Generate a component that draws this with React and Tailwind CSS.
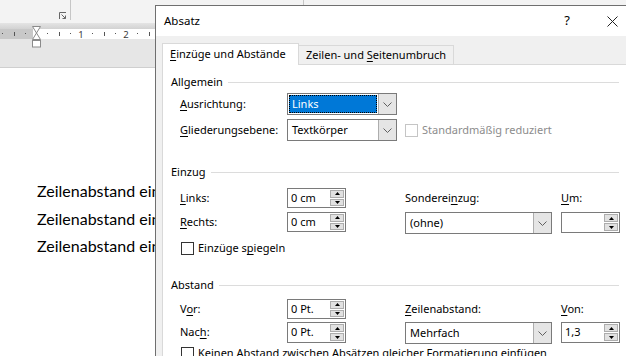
import React from 'react';

const U = ({ children }) => (
  <span className="underline decoration-[1px] underline-offset-[2px]">{children}</span>
);

function Chevron() {
  return (
    <svg width="9" height="5" viewBox="0 0 9 5">
      <path d="M0.5 0.5L4.5 4.5L8.5 0.5" fill="none" stroke="#606060" strokeWidth="1" />
    </svg>
  );
}

function Combo({ value, width, selected }) {
  return (
    <div className={`flex h-[22px] border border-[#7a7a7a] bg-white ${width}`}>
      <div className="flex flex-1 items-center p-px">
        {selected ? (
          <div className="flex h-full w-full items-center border border-dotted border-black bg-[#0078d7] pl-[2px] text-white">
            {value}
          </div>
        ) : (
          <span className="pl-[3px]">{value}</span>
        )}
      </div>
      <div className="flex w-[18px] items-center justify-center border-l border-[#adadad] bg-[#e5e5e5]">
        <Chevron />
      </div>
    </div>
  );
}

function Spin({ value, height = 'h-[20px]' }) {
  return (
    <div className={`flex w-[59px] border border-[#7a7a7a] bg-white ${height}`}>
      <div className="flex flex-1 items-center pl-[3px]">{value}</div>
      <div className="flex w-[16px] flex-col gap-px p-px">
        <div className="flex flex-1 items-center justify-center border border-[#adadad] bg-[#e1e1e1]">
          <svg width="5" height="3" viewBox="0 0 5 3">
            <path d="M2.5 0L5 3H0Z" fill="#000" />
          </svg>
        </div>
        <div className="flex flex-1 items-center justify-center border border-[#adadad] bg-[#e1e1e1]">
          <svg width="5" height="3" viewBox="0 0 5 3">
            <path d="M0 0H5L2.5 3Z" fill="#000" />
          </svg>
        </div>
      </div>
    </div>
  );
}

function Check({ disabled }) {
  return (
    <div
      className={`h-[13px] w-[13px] shrink-0 border bg-white ${
        disabled ? 'border-[#c5c5c5]' : 'border-[#333333]'
      }`}
    />
  );
}

function Group({ title }) {
  return (
    <div className="flex h-[16px] items-center pl-[8px] pr-[9px]">
      <span>{title}</span>
      <div className="ml-[5px] h-px flex-1 bg-[#dcdcdc]" />
    </div>
  );
}

function Label({ children, width = 'w-[107px]', h = 'h-[20px]' }) {
  return <div className={`flex shrink-0 items-center whitespace-nowrap ${width} ${h}`}>{children}</div>;
}

function Ruler() {
  const ticks = [];
  for (let k = -3; k <= 52; k++) {
    if (k === 0) continue;
    const x = 36 + 11.25 * k;
    const m = ((k % 4) + 4) % 4;
    if (m === 0) {
      ticks.push(
        <text key={k} x={x} y={8.5} fontSize="9.5" textAnchor="middle" fill="#3c3c3c" fontFamily="Noto Sans, sans-serif">
          {k / 4}
        </text>
      );
    } else if (m === 2) {
      ticks.push(<rect key={k} x={Math.round(x)} y={3} width={1} height={4} fill="#555" />);
    } else {
      ticks.push(<rect key={k} x={Math.round(x)} y={4} width={1} height={1} fill="#555" />);
    }
  }
  return (
    <svg width="626" height="10" viewBox="0 0 626 10" className="block">
      <rect x="0" y="0" width="626" height="10" fill="#ffffff" />
      <rect x="0" y="0" width="33" height="10" fill="#c8c8c8" />
      {ticks}
    </svg>
  );
}

export default function App() {
  const lines = ['Zeilenabstand ein', 'Zeilenabstand ein', 'Zeilenabstand ein'];
  return (
    <div className="relative h-[356px] w-[626px] overflow-hidden bg-white font-['Noto_Sans',sans-serif] text-[11px] text-black">
      {/* Word-Hintergrund */}
      <div className="flex h-[23px] bg-[#f3f3f3]">
        <div className="w-[70px] pl-[59px] pt-[12px]">
          <svg width="8" height="8" viewBox="0 0 8 8">
            <path d="M0.5 7V0.5H7" fill="none" stroke="#666" strokeWidth="1" />
            <path d="M2.5 2.5L6.5 6.5M6.5 3.5V6.5H3.5" fill="none" stroke="#666" strokeWidth="1" />
          </svg>
        </div>
        <div className="h-[20px] w-px bg-[#c6c6c6]" />
        <div className="w-[232px]" />
        <div className="h-[20px] w-px bg-[#c6c6c6]" />
      </div>
      <div className="h-[6px] bg-gradient-to-b from-[#e4e4e4] to-[#d2d2d2]" />
      <Ruler />
      <div className="h-[29px] border-b border-[#cfcfcf] bg-[#e6e6e6]" />
      <div className="pl-[37px] pt-[109px] font-['Lato',sans-serif] text-[16px] leading-[27.5px]">
        {lines.map((l, i) => (
          <div key={i} className="whitespace-nowrap">
            {l}
          </div>
        ))}
      </div>

      {/* Einzugsmarke */}
      <svg className="absolute left-[32px] top-[26px]" width="9" height="22" viewBox="0 0 9 22">
        <path d="M0.5 0.5H8.5L4.5 7L8.5 13.5H0.5L4.5 7Z" fill="#fff" stroke="#8a8a8a" />
        <rect x="0.5" y="14.5" width="8" height="6.5" fill="#fff" stroke="#8a8a8a" />
      </svg>

      {/* Dialog Absatz */}
      <div className="absolute left-[155px] top-[5px] flex h-[360px] w-[480px] flex-col border-l border-t border-[#6f6f6f] bg-[#f0f0f0]">
        <div className="flex h-[30px] shrink-0 items-center bg-white pl-[8px]">
          <span className="text-[11.5px]">Absatz</span>
          <div className="flex-1" />
          <span className="w-[20px] text-center text-[13px]">?</span>
          <div className="ml-[25px] mr-[13px] flex w-[20px] justify-center">
            <svg width="11" height="11" viewBox="0 0 11 11">
              <path d="M0.5 0.5L10.5 10.5M10.5 0.5L0.5 10.5" stroke="#222" strokeWidth="1" />
            </svg>
          </div>
        </div>

        <div className="flex flex-1 flex-col px-[6px] pt-[7px]">
          <div className="flex h-[21px] items-end whitespace-nowrap">
            <div className="relative z-10 -mb-px flex h-[22px] w-[137px] items-center border-l border-r border-t border-[#d9d9d9] bg-white pl-[7px] pb-[1px]">
              <span>
                <U>E</U>inzüge und Abstände
              </span>
            </div>
            <div className="flex h-[19px] w-[155px] items-center border-r border-t border-[#d9d9d9] pl-[7px]">
              <span>
                Zeilen- und <U>S</U>eitenumbruch
              </span>
            </div>
          </div>

          <div className="flex-1 border border-[#d9d9d9] bg-white">
            <div className="mt-[9px]">
              <Group title="Allgemein" />
            </div>
            <div className="ml-[17px] mt-[3px]">
              <div className="flex h-[26px] items-start">
                <Label h="h-[22px]">
                  <span>
                    <U>A</U>usrichtung:
                  </span>
                </Label>
                <Combo value="Links" width="w-[110px]" selected />
              </div>
              <div className="flex h-[22px] items-center">
                <Label h="h-[22px]">
                  <span>
                    <U>G</U>liederungsebene:
                  </span>
                </Label>
                <Combo value="Textkörper" width="w-[110px]" />
                <div className="ml-[8px] flex items-center gap-[4px] whitespace-nowrap text-[#8c8c8c]">
                  <Check disabled />
                  <span>Standardmäßig reduziert</span>
                </div>
              </div>
            </div>

            <div className="mt-[23px]">
              <Group title="Einzug" />
            </div>
            <div className="ml-[17px] mt-[8px]">
              <div className="flex h-[24px] items-start">
                <Label>
                  <span>
                    <U>L</U>inks:
                  </span>
                </Label>
                <div className="w-[118px]">
                  <Spin value="0 cm" />
                </div>
                <Label width="w-[156px]">
                  <span>
                    Sonderei<U>n</U>zug:
                  </span>
                </Label>
                <Label width="w-[59px]">
                  <span>
                    <U>U</U>m:
                  </span>
                </Label>
              </div>
              <div className="flex h-[24px] items-start">
                <Label>
                  <span>
                    <U>R</U>echts:
                  </span>
                </Label>
                <div className="w-[118px]">
                  <Spin value="0 cm" />
                </div>
                <div className="w-[156px]">
                  <Combo value="(ohne)" width="w-[147px]" />
                </div>
                <Spin value="" height="h-[21px]" />
              </div>
              <div className="mt-[6px] flex h-[13px] items-center gap-[4px] pl-px">
                <Check />
                <span>
                  Einzüge s<U>p</U>iegeln
                </span>
              </div>
            </div>

            <div className="mt-[22px]">
              <Group title="Abstand" />
            </div>
            <div className="ml-[17px] mt-[6px]">
              <div className="flex h-[23px] items-start">
                <Label>
                  <span>
                    V<U>o</U>r:
                  </span>
                </Label>
                <div className="w-[118px]">
                  <Spin value="0 Pt." />
                </div>
                <Label width="w-[156px]">
                  <span>
                    <U>Z</U>eilenabstand:
                  </span>
                </Label>
                <Label width="w-[59px]">
                  <span>
                    <U>V</U>on:
                  </span>
                </Label>
              </div>
              <div className="flex h-[23px] items-start">
                <Label h="h-[21px]">
                  <span>
                    Nac<U>h</U>:
                  </span>
                </Label>
                <div className="w-[118px]">
                  <Spin value="0 Pt." height="h-[21px]" />
                </div>
                <div className="w-[156px]">
                  <Combo value="Mehrfach" width="w-[147px]" />
                </div>
                <Spin value="1,3" height="h-[21px]" />
              </div>
              <div className="mt-[2px] flex h-[13px] items-center gap-[4px] pl-px">
                <Check />
                <span className="whitespace-nowrap">
                  Keinen Abstand zwischen Absätzen gleicher Formatierung einfügen
                </span>
              </div>
            </div>
          </div>
        </div>
      </div>
    </div>
  );
}
